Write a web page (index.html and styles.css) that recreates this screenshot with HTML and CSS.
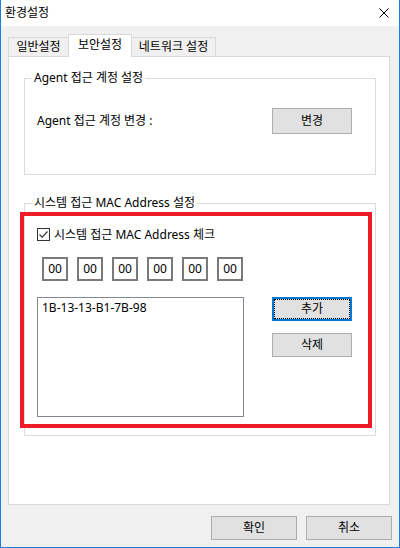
FILE: index.html
```html
<!DOCTYPE html>
<html lang="ko">
<head>
<meta charset="utf-8">
<title>환경설정</title>
<link rel="stylesheet" href="styles.css">
</head>
<body>
<div class="window">
  <div class="titlebar">
    <span class="title">환경설정</span>
    <svg class="close" width="10" height="10" viewBox="0 0 10 10"><path d="M0.5 0.5 L9.5 9.5 M9.5 0.5 L0.5 9.5" stroke="#000" stroke-width="1" fill="none"/></svg>
  </div>
  <div class="client">
    <div class="tabs">
      <div class="tab tab-general">일반설정</div>
      <div class="tab tab-security active">보안설정</div>
      <div class="tab tab-network">네트워크 설정</div>
    </div>
    <div class="panel">
      <div class="group group-agent">
        <span class="group-title">Agent 접근 계정 설정</span>
        <div class="agent-row">
          <span class="label">Agent 접근 계정 변경 :</span>
          <button class="btn btn-change">변경</button>
        </div>
      </div>
      <div class="group group-mac">
        <span class="group-title">시스템 접근 MAC Address 설정</span>
        <div class="highlight">
          <div class="check-row">
            <span class="checkbox"><svg width="11" height="11" viewBox="0 0 11 11"><path d="M1.5 5.5 L4.2 8.2 L9.5 2.5" stroke="#333" stroke-width="1.2" fill="none"/></svg></span>
            <span class="check-label">시스템 접근 MAC Address 체크</span>
          </div>
          <div class="octets">
            <span class="octet">00</span>
            <span class="octet">00</span>
            <span class="octet">00</span>
            <span class="octet">00</span>
            <span class="octet">00</span>
            <span class="octet">00</span>
          </div>
          <div class="list-row">
            <div class="listbox">
              <div class="list-item">1B-13-13-B1-7B-98</div>
            </div>
            <div class="list-buttons">
              <button class="btn btn-focus">추가</button>
              <button class="btn">삭제</button>
            </div>
          </div>
        </div>
      </div>
    </div>
    <div class="footer">
      <button class="btn btn-footer">확인</button>
      <button class="btn btn-footer">취소</button>
    </div>
  </div>
</div>
</body>
</html>
```

FILE: styles.css
```css
* { box-sizing: border-box; }
html, body { margin: 0; padding: 0; }
body {
  width: 400px;
  height: 548px;
  font-family: "Noto Sans", "Noto Sans CJK KR", sans-serif;
  font-size: 12px;
  color: #000;
  background: #fff;
}
.window {
  width: 400px;
  height: 548px;
  border: 1px solid #1C7ED6;
  border-top: none;
  display: flex;
  flex-direction: column;
}
.titlebar {
  height: 26px;
  flex: 0 0 26px;
  background: #fff;
  display: flex;
  align-items: center;
  justify-content: space-between;
  padding: 0 10px 1px 4px;
}
.title { line-height: 16px; }
.close { display: block; margin-top: 1px; }
.client {
  flex: 1;
  background: #F0F0F0;
  padding: 8px 7px 0 7px;
  display: flex;
  flex-direction: column;
}
.tabs {
  display: flex;
  align-items: flex-end;
  height: 22px;
}
.tab {
  height: 19px;
  border: 1px solid #D9D9D9;
  border-bottom: none;
  background: #F0F0F0;
  text-align: center;
  line-height: 17px;
  position: relative;
}
.tab-general { width: 61px; }
.tab-security { width: 64px; margin-left: -1px; }
.tab-network { width: 85px; margin-left: -1px; }
.tab.active {
  height: 23px;
  background: #fff;
  margin-bottom: -1px;
  z-index: 2;
  line-height: 19px;
}
.panel {
  width: 382px;
  height: 449px;
  background: #fff;
  border: 1px solid #D9D9D9;
  padding: 21px 0 0 15px;
}
.group {
  position: relative;
  width: 352px;
  border: 1px solid #DCDCDC;
}
.group-title {
  position: absolute;
  top: -9px;
  left: 7px;
  padding: 0 2px;
  background: #fff;
  line-height: 16px;
  white-space: nowrap;
}
.group-agent { height: 97px; }
.group-mac { height: 233px; margin-top: 28px; }
.agent-row {
  display: flex;
  align-items: center;
  justify-content: space-between;
  padding: 29px 23px 0 12px;
}
.label { line-height: 16px; }
.btn {
  font-family: inherit;
  font-size: 12px;
  color: #000;
  background: #E1E1E1;
  border: 1px solid #ADADAD;
  padding: 0;
  margin: 0;
  line-height: 16px;
  text-align: center;
}
.btn-change { width: 80px; height: 26px; }
.highlight {
  width: 352px;
  height: 216px;
  margin: 8px 0 0 -5px;
  border: 4px solid #ED1C24;
  padding: 12px 0 0 13px;
}
.check-row {
  display: flex;
  align-items: center;
  height: 13px;
}
.checkbox {
  width: 13px;
  height: 13px;
  border: 1px solid #333;
  background: #fff;
  display: flex;
  align-items: center;
  justify-content: center;
}
.checkbox svg { display: block; }
.check-label { margin-left: 4px; line-height: 16px; white-space: nowrap; }
.octets {
  display: flex;
  gap: 9px;
  margin: 16px 0 0 5px;
}
.octet {
  width: 26px;
  height: 24px;
  border: 2px solid #7A7A7A;
  background: #fff;
  text-align: center;
  line-height: 20px;
}
.list-row {
  display: flex;
  margin-top: 16px;
}
.listbox {
  width: 207px;
  height: 120px;
  border: 1px solid #828790;
  background: #fff;
  padding: 2px 0 0 4px;
}
.list-item { line-height: 16px; }
.list-buttons {
  display: flex;
  flex-direction: column;
  gap: 12px;
  margin-left: 28px;
}
.list-buttons .btn { width: 80px; height: 24px; }
.btn-focus {
  border: 2px solid #0078D7;
  outline: 1px dotted #000;
  outline-offset: -3px;
}
.footer {
  display: flex;
  justify-content: flex-end;
  gap: 9px;
  padding: 11px 0 0 0;
}
.btn-footer { width: 86px; height: 24px; }
```
